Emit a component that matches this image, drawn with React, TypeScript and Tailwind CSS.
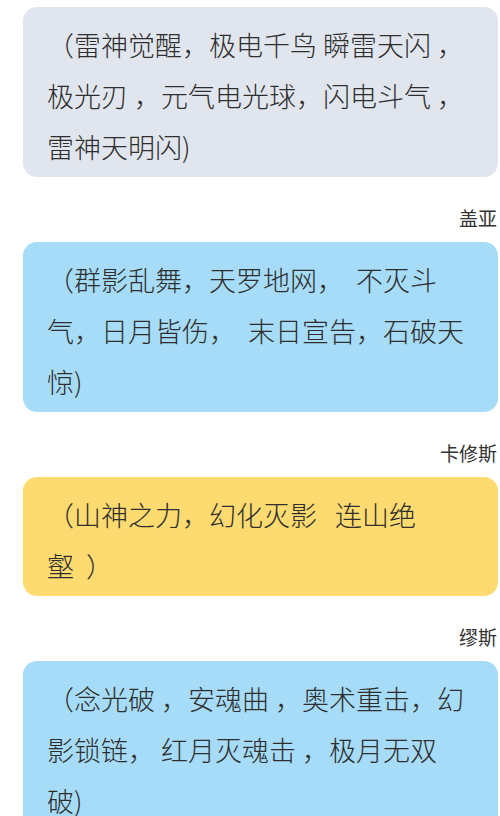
const font = { fontFamily: '"Noto Sans CJK SC", "Noto Sans", sans-serif' };

interface Message {
  name?: string;
  color: string;
  lines: string[];
}

const messages: Message[] = [
  {
    color: "bg-[#e1e6ee]",
    lines: ["（雷神觉醒，极电千鸟 瞬雷天闪 ，", "极光刃 ，元气电光球，闪电斗气 ，", "雷神天明闪)"],
  },
  {
    name: "盖亚",
    color: "bg-[#a6dcf8]",
    lines: ["（群影乱舞，天罗地网，  不灭斗", "气，日月皆伤，  末日宣告，石破天", "惊)"],
  },
  {
    name: "卡修斯",
    color: "bg-[#fddb70]",
    lines: ["（山神之力，幻化灭影   连山绝", "壑  ）"],
  },
  {
    name: "缪斯",
    color: "bg-[#a6dcf8]",
    lines: ["（念光破 ，安魂曲 ，奥术重击，幻", "影锁链， 红月灭魂击 ，极月无双", "破)"],
  },
];

function Bubble({ msg }: { msg: Message }) {
  return (
    <div className={`ml-[23px] mr-[2px] rounded-[14px] ${msg.color} pl-[24px] pr-3 pt-[12px] pb-[5px]`}>
      {msg.lines.map((line, i) => (
        <div key={i} className="whitespace-pre text-[27px] font-light leading-[51px] text-[#2e2e2e]">
          {line}
        </div>
      ))}
    </div>
  );
}

export default function App() {
  return (
    <div className="w-[500px] h-[816px] overflow-hidden bg-white pt-[7px]" style={font}>
      {messages.map((msg, i) => (
        <div key={i}>
          {msg.name && (
            <div className="pt-[31px] pb-[14px] pr-[3px] text-right text-[19px] leading-[20px] text-[#333]">
              {msg.name}
            </div>
          )}
          <Bubble msg={msg} />
        </div>
      ))}
    </div>
  );
}
